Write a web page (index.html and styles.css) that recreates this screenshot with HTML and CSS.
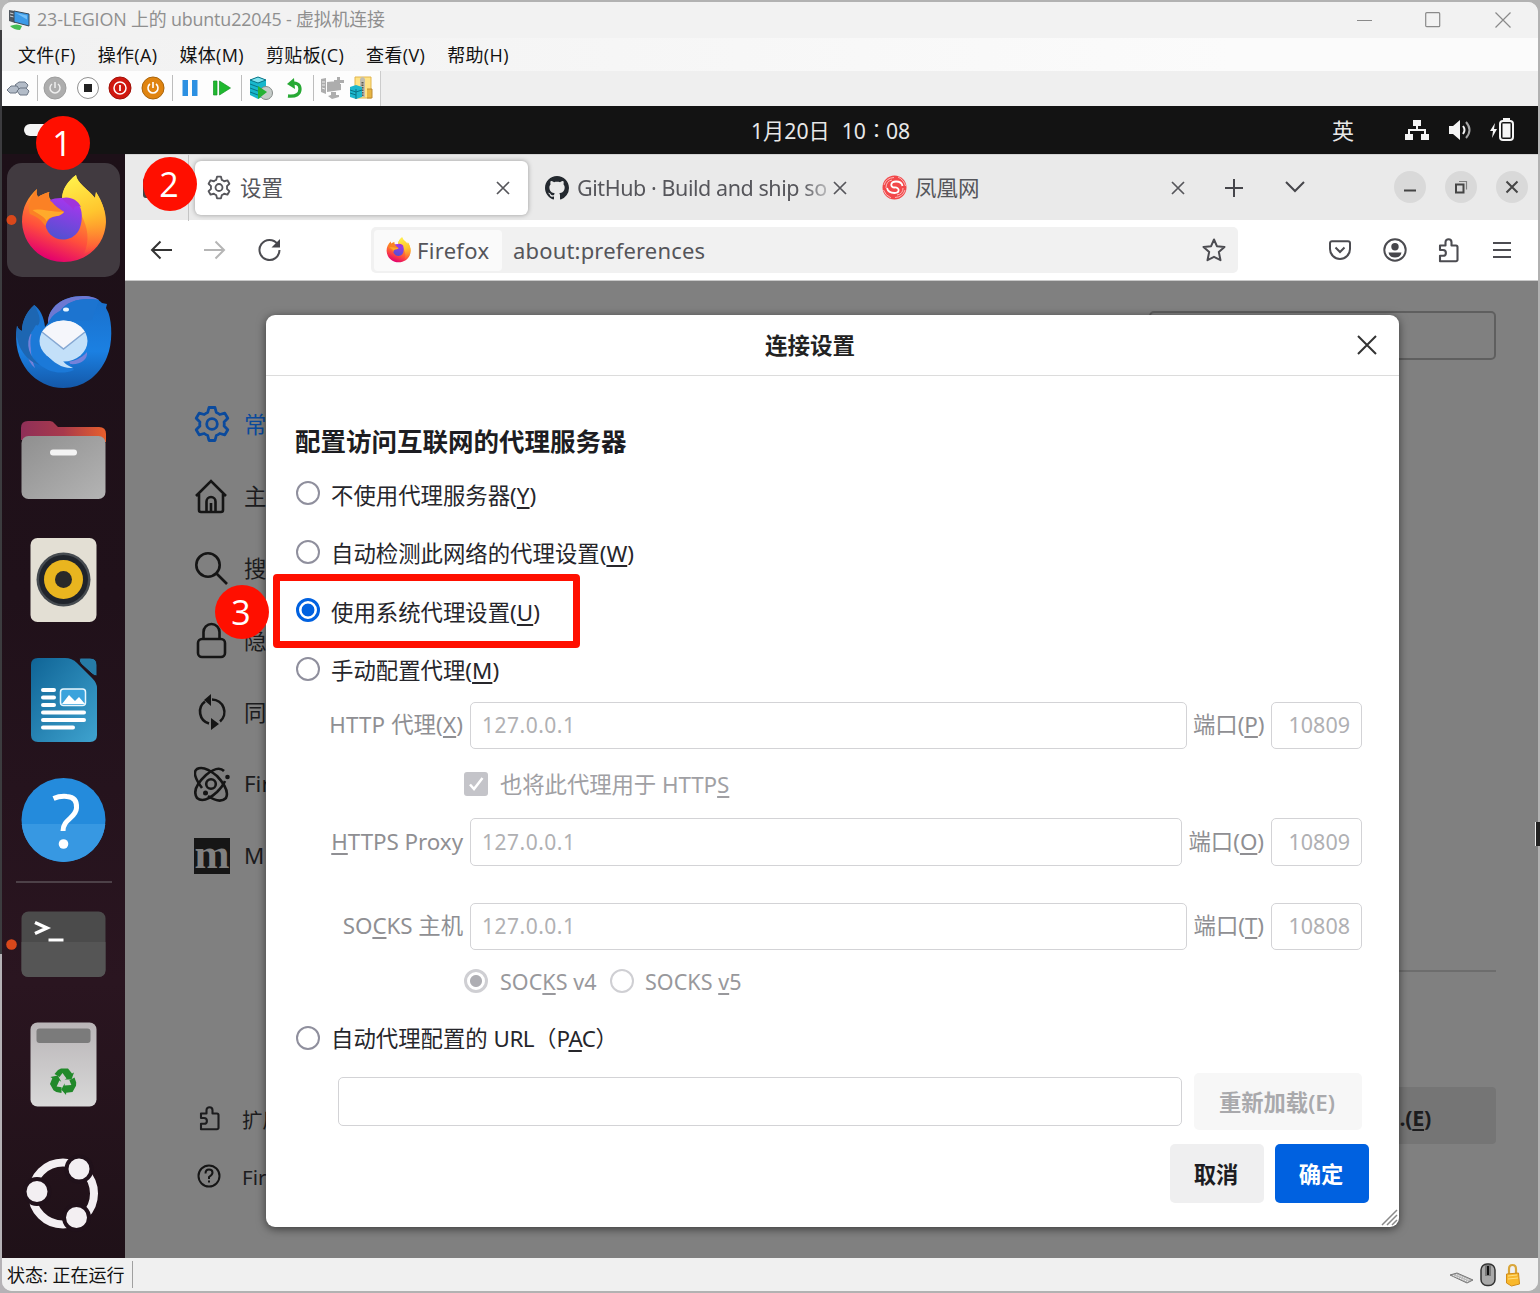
FILE: index.html
```html
<!DOCTYPE html>
<html lang="zh-CN">
<head>
<meta charset="utf-8">
<title>23-LEGION 上的 ubuntu22045 - 虚拟机连接</title>
<link rel="stylesheet" href="styles.css">
</head>
<body>
<svg class="defs" width="0" height="0" aria-hidden="true">
  <defs>
    <linearGradient id="foxBody" x1=".75" y1=".1" x2=".4" y2="1"><stop offset="0" stop-color="#ffd93a"/><stop offset=".35" stop-color="#ff9a2a"/><stop offset=".68" stop-color="#ff4f3c"/><stop offset="1" stop-color="#e3006e"/></linearGradient>
    <linearGradient id="foxFlame" x1=".4" y1="0" x2=".6" y2="1"><stop offset="0" stop-color="#fff04a"/><stop offset=".5" stop-color="#ffc62e"/><stop offset="1" stop-color="#ff8a2c" stop-opacity=".1"/></linearGradient>
    <linearGradient id="foxBall" x1=".6" y1="0" x2=".3" y2="1"><stop offset="0" stop-color="#a736ee"/><stop offset="1" stop-color="#4f52cf"/></linearGradient>
    <linearGradient id="bird" x1="0" y1="0" x2="0" y2="1"><stop offset="0" stop-color="#1a6fca"/><stop offset=".6" stop-color="#1b80e2"/><stop offset="1" stop-color="#1458a8"/></linearGradient>
    <linearGradient id="folderBack"><stop offset="0" stop-color="#8f2f58"/><stop offset=".5" stop-color="#a83a4c"/><stop offset="1" stop-color="#e8602c"/></linearGradient>
    <linearGradient id="folderFront" x1="0" y1="0" x2="1" y2="1"><stop offset="0" stop-color="#8f8f8f"/><stop offset="1" stop-color="#b4b4b4"/></linearGradient>
    <linearGradient id="doc" x1="0" y1="0" x2="1" y2="1"><stop offset="0" stop-color="#0f6496"/><stop offset="1" stop-color="#3fa3cf"/></linearGradient>
    <linearGradient id="bin" x1="0" y1="0" x2="0" y2="1"><stop offset="0" stop-color="#b9b5b7"/><stop offset="1" stop-color="#d9d9d9"/></linearGradient>
    <symbol id="firefox" viewBox="20 175 87 88">
      <path d="M37 189C36 193 37 195 38 197C41 195 45 193 49.300 192C48.500 195 49 198 51 200H62C62 189 68 181 76 175C77 183 88 189 95 198L96 192C102 202 106 211 106 222C105 247 85 262 64 262C41 262 23 245 22 222C22 207 28 197 37 189Z" fill="url(#foxBody)"/>
      <path d="M76 175C77 183 88 189 95 198L96 192C103 203 106 213 105.500 224C104 240 96 249 84 254C90 240 88 228 81 214C78 204 68 200 62 199C62 189 68 181 76 175Z" fill="url(#foxFlame)"/>
      <path d="M50 200C57 197 72 196 80 207C83 213 82 224 79 230C75 237 69 239.500 63 239.500C53 239.500 45 232 45 221C45 212 47 204 50 200Z" fill="url(#foxBall)"/>
      <path d="M62 198C70 196 78 200 81 207C77 205 73 206 74 210C68 203 64 202 62 198Z" fill="#a034dc"/>
      <path d="M37 189C36 193 37 195 38 197C41 195 45 193 49.300 192C48 196 49 200 52 202C55 206 59 209 64 211.700C62 215 58 216 54 216.500C49 218 47 221 45.500 226C42 221 38 217 30 214C27 208 30 196 37 189Z" fill="#fb8125"/>
      <path d="M32.500 210C40 208 50 212 64 211.700C62 215 58 216 54 216.500C50 217 48 219 46.500 221C44 216 38 214 32.500 210Z" fill="#ffaa2b"/>
    </symbol>
    <symbol id="gear" viewBox="0 0 36 38"><path d="M15 2.500h6l1.300 5a12 12 0 0 1 3.500 2l5-1.400 3 5.200-3.700 3.700a12 12 0 0 1 0 4l3.700 3.700-3 5.200-5-1.400a12 12 0 0 1-3.500 2l-1.300 5h-6l-1.300-5a12 12 0 0 1-3.500-2l-5 1.400-3-5.200 3.700-3.700a12 12 0 0 1 0-4l-3.700-3.700 3-5.200 5 1.400a12 12 0 0 1 3.500-2z" fill="none" stroke="currentColor" stroke-width="2.800" stroke-linejoin="round"/><circle cx="18" cy="19" r="5.300" fill="none" stroke="currentColor" stroke-width="2.800"/></symbol>
    <symbol id="puzzle" viewBox="0 0 22 26"><path d="M2 8.500h5.500V5.200a3 3 0 0 1 6 0v3.300h4.500a1.500 1.500 0 0 1 1.500 1.500v12.800a1.500 1.500 0 0 1-1.500 1.500H2v-5.500h3a2.900 2.900 0 0 0 0-5.800H2z" fill="none" stroke="currentColor" stroke-width="2.100" stroke-linejoin="round"/></symbol>
    <symbol id="cross" viewBox="0 0 14 14"><path d="M1 1l12 12M13 1L1 13" fill="none" stroke="currentColor" stroke-width="1.700"/></symbol>
  </defs>
</svg>

<div class="window">
  <header class="titlebar">
    <svg class="vm-icon" width="22" height="22" viewBox="0 0 22 22"><path d="M1 1l6 1v12l-6-2z" fill="#50575e"/><path d="M2 4l4 1M2 7l4 1" stroke="#c9d0d6"/><path d="M6 2l15 3v12L6 13z" fill="#3b9ae8" stroke="#3a4a58"/><path d="M8 4l11 2.500v4z" fill="#74c0f7"/><path d="M2 17q7-3 12 0l-2 4q-6 0-10-4z" fill="#45bd53"/></svg>
    <span class="title">23-LEGION 上的 ubuntu22045 - 虚拟机连接</span>
    <div class="caption">
      <svg width="16" height="16" viewBox="0 0 16 16"><path d="M0 8.500h15"/></svg>
      <svg width="16" height="16" viewBox="0 0 16 16"><rect x=".7" y=".7" width="14" height="14" rx="1"/></svg>
      <svg width="16" height="16" viewBox="0 0 16 16"><path d="M.5.5l15 15M15.500.5l-15 15"/></svg>
    </div>
  </header>
  <nav class="menubar">
    <span>文件(F)</span><span>操作(A)</span><span>媒体(M)</span><span>剪贴板(C)</span><span>查看(V)</span><span>帮助(H)</span>
  </nav>
  <div class="toolbar">
    <div class="tools">
      <svg width="24" height="24" viewBox="0 0 24 24"><g fill="#b3bcc8" stroke="#6d7785"><path d="M9 9l4-3h6l3 3-2 4h-8z"/><path d="M1 14l4-4h6l2 3-3 4H4z"/><path d="M11 15l3-3h6l3 3-2 4-7 0z"/></g></svg>
      <i></i>
      <svg width="24" height="24" viewBox="0 0 24 24"><circle cx="12" cy="12" r="11" fill="#adadad" stroke="#9d9d9d"/><path d="M9 8a5 5 0 1 0 6 0M12 6v6" fill="none" stroke="#eee" stroke-width="1.500"/></svg>
      <svg width="24" height="24" viewBox="0 0 24 24"><circle cx="12" cy="12" r="10.500" fill="#fff" stroke="#909090"/><path d="M8 8h8v8H8z" fill="#222"/></svg>
      <svg width="24" height="24" viewBox="0 0 24 24"><circle cx="12" cy="12" r="11" fill="#d0180f" stroke="#a01008"/><circle cx="12" cy="12" r="6" fill="none" stroke="#fff" stroke-width="1.500"/><path d="M12 9v6" stroke="#fff" stroke-width="1.700"/></svg>
      <svg width="24" height="24" viewBox="0 0 24 24"><circle cx="12" cy="12" r="11" fill="#e08410" stroke="#a8640c"/><path d="M9 8a5 5 0 1 0 6 0M12 6v6" fill="none" stroke="#fff" stroke-width="1.600"/></svg>
      <i></i>
      <svg width="24" height="24" viewBox="0 0 24 24"><path d="M4.500 4h5.500v16H4.500zM14 4h5.500v16H14z" fill="#2c90e2"/></svg>
      <svg width="24" height="24" viewBox="0 0 24 24"><path d="M3.500 5h3.500v14H3.500zM9.500 5l11 7-11 7z" fill="#1fb92f" stroke="#149425" stroke-width=".7"/></svg>
      <i></i>
      <svg width="24" height="24" viewBox="0 0 24 24"><path d="M1 4l8-3 8 3v15l-8 4-8-4z" fill="#18b7cc"/><path d="M1 4l8-3 8 3-8 3zM1 8l8 3M1 12l8 3M1 16l8 3" fill="#7fe3ee" stroke="#087487"/><circle cx="17" cy="17" r="6.500" fill="#c5cbc8" stroke="#858b88"/><path d="M9 10l9 6-9 7z" fill="#25b334"/></svg>
      <svg width="24" height="24" viewBox="0 0 24 24"><path d="M6 20c8 1 12-2 12-7s-4-7-10-5" fill="none" stroke="#27a934" stroke-width="3.300"/><path d="M12 2L5 8l8 5z" fill="#27a934"/></svg>
      <i></i>
      <svg width="24" height="24" viewBox="0 0 24 24"><path d="M1 3l5-1v16l-5-2zM7 6l10-1v3h4v6l-14 2zM11 16h5v3h3v2l-7 2-4-3 3-1zM17 1h3v3h4v3h-4v4h-3V7h-3V4h3z" fill="#adadad"/><path d="M2 6l3 0M2 9l3 0M2 12l3 1" stroke="#eee"/></svg>
      <svg width="24" height="24" viewBox="0 0 24 24"><path d="M6 1h16v21H6z" fill="#ffe385" stroke="#e2b54c"/><path d="M18 13h5v9h-5" stroke="#bd8b34" fill="#e6b441"/><path d="M11 3q2.500-4 5 0v18h-5z" fill="#c1bdb0"/><path d="M13.500 6v14" stroke="#5d594d" stroke-width="2" stroke-dasharray="1.500 1"/><path d="M1 11l6-2 6 2v10l-6 2-6-2z" fill="#1cb7cc"/><path d="M1 14l6 2 6-2M1 17l6 2M7 13v10" stroke="#087487" fill="none"/></svg>
    </div>
  </div>

  <main class="guest">
    <div class="topbar">
      <span class="pill"></span>
      <span class="clock"><span>1月20日</span><span>10<small>∶</small>08</span></span>
      <span class="ime">英</span>
      <svg class="net" width="24" height="20" viewBox="0 0 24 20"><path d="M8 0h8v6H8zM0 14h8v6H0zM16 14h8v6h-8z" fill="#f5f5f5"/><path d="M12 6v4M4 14v-4h16v4" fill="none" stroke="#f5f5f5" stroke-width="2"/></svg>
      <svg class="vol" width="23" height="22" viewBox="0 0 23 22"><path d="M0 7h4l7-6v20l-7-6H0z" fill="#f5f5f5"/><path d="M14 7q3 4 0 8" fill="none" stroke="#f5f5f5" stroke-width="2"/><path d="M17 3q7 8 0 16" fill="none" stroke="#a5a5a5" stroke-width="2"/></svg>
      <svg class="bat" width="25" height="24" viewBox="0 0 25 24"><path d="M5 5L0 13h3l-1 7 5-9H4z" fill="#f5f5f5"/><rect x="10" y="3" width="13" height="19" rx="3" fill="none" stroke="#f5f5f5" stroke-width="2"/><path d="M12.500 5.500h8v14h-8zM13 0h7v2h-7z" fill="#f5f5f5"/></svg>
    </div>

    <div class="desktop">
      <aside class="dock">
        <svg viewBox="2 160 123 120"><rect x="7" y="163" width="113" height="114" rx="15" fill="#413a40"/><circle cx="11.500" cy="220" r="5" fill="#d9481b"/><use href="#firefox" x="20" y="175" width="87" height="88"/></svg>
        <svg viewBox="2 280 123 120"><path d="M17 325.700C18 329 20 330 22 331C22 321 27 311 34.300 305C40 309 44 317 45 327L48 323C48 307 63 296 83 296C92 296 98 299 102 303L107 304L106 308L108.500 313C112 323 113 343 107 357C99 377 82 388 63.500 388C36 388 11 363 17 325.700Z" fill="url(#bird)"/><path d="M48 323C48 307 63 296 83 296C91 296 96 298 99 300C84 297 68 300 61 311C55 313 51 317 48 323Z" fill="#6d78d2"/><path d="M60 311C67 300 84 297 99 300L92 320L50 322C52 316 56 313 60 311Z" fill="#1c74d0"/><path d="M29 333C24 345 26 361 35 368C31 357 29 348 33 335ZM62 361C70 363 80 360 87 352C88 360 80 365 70 364Z" fill="#7482da"/><path d="M17 325.700C14 347 28 362 40 365C29 357 25 344 31 333C36 325 46 326 34.300 305C27 311 22 321 22 331C20 330 18 329 17 325.700Z" fill="#1d66b2"/><path d="M36 325C27 338 30 352 37 362C45 371 60 376 74 370L50 330Z" fill="#1b79d8"/><ellipse cx="63.500" cy="341" rx="24" ry="20.500" fill="#c3e0f9"/><path d="M42 332Q50 320.500 63.500 320.500Q78 320.500 85 332L63.500 349Z" fill="#f5f6fb"/><path d="M42 332l21.500 17L85 332" fill="none" stroke="#86a8d3" stroke-width="1.500"/><path d="M47 355C54 363 63 369 73 368C66 365 61 361 62 356Z" fill="#c3e0f9"/><ellipse cx="66" cy="309.500" rx="3" ry="2" fill="#e6f5ff"/></svg>
        <svg viewBox="2 400 123 120"><path d="M21 440v-12q0-7 7-7h22q3 0 5 3l3 3h41q7 0 7 7v8z" fill="url(#folderBack)"/><rect x="21.500" y="436" width="84" height="63" rx="7" fill="url(#folderFront)"/><rect x="50" y="449.500" width="27" height="6" rx="3" fill="#f4f4f4"/></svg>
        <svg viewBox="2 520 123 120"><rect x="30.500" y="538" width="66" height="84" rx="7" fill="#e3dfd4"/><circle cx="63.500" cy="579.500" r="27" fill="#464b50"/><circle cx="63.500" cy="579.500" r="24.500" fill="#20242b"/><circle cx="63.500" cy="579.500" r="19.500" fill="#e9b51f"/><circle cx="63.500" cy="579.500" r="8.500" fill="#292929"/></svg>
        <svg viewBox="2 640 123 120"><path d="M38 658h27q7 0 12 5l15 15q5 5 5 10v47q0 7-7 7H38q-7 0-7-7v-70q0-7 7-7z" fill="url(#doc)"/><path d="M80 658h10q7 0 7 7v11q-3 0-5-2L81 664q-3-3-1-6z" fill="#267ba7" stroke="#20111a"/><path d="M43 690h11M43 697.500h11M43 705h11M43 712.500h41M43 720h41M43 727.500h30" stroke="#fff" stroke-width="4" stroke-linecap="round"/><rect x="60.500" y="689" width="25" height="16.500" rx="3" fill="#3aa3dc" stroke="#e9f6fd" stroke-width="1.500"/><path d="M62 704l7-9 6 6 4-4 6 7z" fill="#fff"/></svg>
        <svg viewBox="2 760 123 120"><circle cx="63.500" cy="820" r="42" fill="#248bdc"/><path d="M21.700 824a42 42 0 0 0 83.600 0z" fill="#3798e2"/><path d="M53.500 798.500C57 797 62 796 67 796.500C74 797 77 801 76.500 808C76 818 63 819 63 831" fill="none" stroke="#fff" stroke-width="5"/><circle cx="63.500" cy="844" r="4.800" fill="#fff"/></svg>
        <hr>
        <svg viewBox="2 884 123 120"><circle cx="11.500" cy="944.500" r="5.300" fill="#d9481b"/><rect x="21.500" y="911.500" width="84" height="65.500" rx="7" fill="#4b4b4b"/><path d="M21.500 942h84v28q0 7-7 7h-70q-7 0-7-7z" fill="#555"/><path d="M35 922.500l12 5.500-12 5.500" fill="none" stroke="#fff" stroke-width="3.400"/><path d="M48.500 940h15" stroke="#fff" stroke-width="3"/></svg>
        <svg viewBox="2 1004 123 120"><rect x="30.500" y="1022.500" width="66" height="84" rx="7" fill="url(#bin)"/><rect x="36.500" y="1028.500" width="54" height="14.500" rx="3" fill="#7b7b7b"/><g fill="#21892a"><path d="M58 1070l3-1.500h7l4 5 2-1-2.500 7h-7l2-1-4-5.500-3 4-5-3z"/><path d="M58 1070l3-1.500h7l4 5 2-1-2.500 7h-7l2-1-4-5.500-3 4-5-3z" transform="rotate(120 63.500 1081.500)"/><path d="M58 1070l3-1.500h7l4 5 2-1-2.500 7h-7l2-1-4-5.500-3 4-5-3z" transform="rotate(240 63.500 1081.500)"/></g></svg>
        <svg class="launcher" viewBox="2 1133 123 120"><circle cx="63" cy="1193.500" r="31" fill="none" stroke="#f3eff2" stroke-width="8"/><g fill="#f3eff2" stroke="#20111a" stroke-width="4"><circle cx="79" cy="1169" r="12.500"/><circle cx="37" cy="1191.500" r="12.500"/><circle cx="76.500" cy="1217.500" r="12.500"/></g></svg>
      </aside>

      <section class="browser">
        <div class="tabstrip">
          <div class="pinned"><i></i></div>
          <div class="tab active">
            <svg class="tab-gear" width="24" height="25"><use href="#gear"/></svg>
            <span>设置</span>
            <svg class="tab-x" width="14" height="14"><use href="#cross"/></svg>
          </div>
          <div class="tab github">
            <svg width="24" height="24" viewBox="0 0 16 16"><path d="M8 0C3.580 0 0 3.580 0 8c0 3.540 2.290 6.530 5.470 7.590.4.070.55-.17.55-.38 0-.19-.01-.82-.01-1.490-2.010.37-2.530-.49-2.690-.94-.09-.23-.48-.94-.82-1.130-.28-.15-.68-.52-.01-.53.63-.01 1.080.58 1.230.82.72 1.210 1.870.87 2.330.66.070-.52.28-.87.51-1.070-1.780-.2-3.640-.89-3.640-3.950 0-.87.31-1.590.82-2.150-.08-.2-.36-1.020.08-2.120 0 0 .67-.21 2.200.82.64-.18 1.320-.27 2-.27s1.360.09 2 .27c1.530-1.040 2.200-.82 2.200-.82.44 1.100.16 1.920.08 2.120.51.56.82 1.270.82 2.150 0 3.070-1.870 3.750-3.650 3.950.29.25.54.73.54 1.480 0 1.070-.01 1.930-.01 2.200 0 .21.15.46.55.38A8.010 8.010 0 0 0 16 8c0-4.420-3.580-8-8-8z" fill="#24292f"/></svg>
            <span class="gh-title">GitHub · Build and ship so</span>
            <svg width="14" height="14"><use href="#cross"/></svg>
          </div>
          <div class="tab ifeng">
            <svg width="25" height="25" viewBox="0 0 25 25"><circle cx="12.500" cy="12.500" r="12" fill="#f2484a"/><path d="M12.500 18C18 18 18 12 12.500 12.500C8 12.500 8 6.500 14 6.500C18 6.500 20 8 20.500 11M12.500 18C9 18 6 17 5 13" fill="none" stroke="#fff" stroke-width="1.800"/><path d="M2 10Q4 3 12 2.500M4 13Q4 6 10 5M23 15Q21 22 13 22.500M21 13Q21 19 15 20M16 2Q22 5 23.500 11M9 23Q3 20 1.500 15" fill="none" stroke="#fbb9b9" stroke-width="1"/></svg>
            <span>凤凰网</span>
            <svg class="ifeng-x" width="14" height="14"><use href="#cross"/></svg>
          </div>
          <svg class="plus" width="18" height="18" viewBox="0 0 18 18"><path d="M9 0v18M0 9h18"/></svg>
          <svg class="chev" width="20" height="12" viewBox="0 0 20 12"><path d="M1 1l9 9 9-9"/></svg>
          <div class="wm">
            <b><svg width="14" height="14" viewBox="0 0 14 14"><path d="M1 10.500h12"/></svg></b>
            <b><svg width="14" height="14" viewBox="0 0 14 14"><path d="M2 4.500h7.500v8H2z"/><path d="M5 1.500h7.500v8" stroke-width="1.200" opacity=".6"/></svg></b>
            <b><svg width="14" height="14" viewBox="0 0 14 14"><path d="M1.500 1.500l11 11M12.500 1.500l-11 11"/></svg></b>
          </div>
        </div>

        <div class="navbar">
          <svg class="back" width="22" height="20" viewBox="0 0 22 20"><path d="M22 10H2M10.500 1.500L2 10l8.500 8.500"/></svg>
          <svg class="fwd" width="22" height="20" viewBox="0 0 22 20"><path d="M0 10h20M11.500 1.500L20 10l-8.500 8.500"/></svg>
          <svg class="reload" width="24" height="24" viewBox="0 0 24 24"><path d="M19.500 6A10 10 0 1 0 21.500 12"/><path d="M22 1v8.500h-8.500z" fill="#46464b" stroke="none"/></svg>
          <div class="urlbar">
            <div class="identity"><svg width="25" height="26"><use href="#firefox"/></svg><span>Firefox</span></div>
            <span class="url">about:preferences</span>
            <svg class="star" width="24" height="24" viewBox="0 0 24 24"><path d="M12 1.500l2.900 6.700 7.600.7-5.700 5 1.700 8.300L12 18.800l-6.500 3.400 1.700-8.300-5.700-5 7.600-.7z" stroke-linejoin="round"/></svg>
          </div>
          <svg class="pocket" width="22" height="20" viewBox="0 0 22 20"><path d="M3 1.200h16a2 2 0 0 1 2 2V9a10 10 0 0 1-20 0V3.200a2 2 0 0 1 2-2z"/><path d="M6.500 7.500l4.500 4.500 4.500-4.500"/></svg>
          <svg class="account" width="24" height="24" viewBox="0 0 24 24"><circle cx="12" cy="12" r="10.700"/><circle cx="12" cy="8.700" r="3.700" fill="#46464b" stroke="none"/><path d="M5.500 14.500h13q-1 5-6.500 5t-6.500-5z" fill="#46464b" stroke="none"/></svg>
          <svg class="ext" width="22" height="26"><use href="#puzzle"/></svg>
          <svg class="burger" width="18" height="16" viewBox="0 0 18 16"><path d="M0 1h18M0 8h18M0 15h18"/></svg>
        </div>

        <div class="page">
          <div class="categories">
            <div class="cat current"><svg width="36" height="38"><use href="#gear"/></svg><span>常</span></div>
            <div class="cat"><svg width="36" height="36" viewBox="0 0 36 36"><path d="M2 18L17 3l15 15M5 16v16q0 2 2 2h20q2 0 2-2V16M12.500 34V23.500a4.500 4.500 0 0 1 9 0V34M17 34v-9"/></svg><span>主</span></div>
            <div class="cat"><svg width="36" height="36" viewBox="0 0 36 36"><circle cx="14" cy="15" r="11.700"/><path d="M22 23l11 11"/></svg><span>搜</span></div>
            <div class="cat"><svg width="36" height="38" viewBox="0 0 36 38"><rect x="4" y="18" width="27" height="18" rx="4"/><path d="M9.500 18v-7a8 8 0 0 1 16 0v7"/></svg><span>隐</span></div>
            <div class="cat"><svg width="36" height="38" viewBox="0 0 36 38"><path d="M11 8.500A12.500 12.500 0 0 0 15 30.500M18 6.500a12.500 12.500 0 0 1 8 22"/><path d="M17 1v12l-7-6zM17 25v12l8-6z" fill="#151515" stroke="none"/></svg><span>同</span></div>
            <div class="cat"><svg width="36" height="38" viewBox="0 0 36 38"><circle cx="17" cy="19" r="4.800"/><path d="M30 6Q24 0 12 10Q-3 24 3 33Q10 39 23 27Q29 21 31 16"/><path d="M8 23Q-3 8 3 4Q10 0 23 11Q36 25 32 33Q26 39 14 31"/><circle cx="33.500" cy="12" r="2.300" fill="#151515" stroke="none"/><circle cx="11.500" cy="28" r="2.500" fill="#151515" stroke="none"/></svg><span>Fir</span></div>
            <div class="cat"><b class="moz">m</b><span>M</span></div>
            <div class="foot first"><svg width="22" height="26"><use href="#puzzle"/></svg><span>扩展</span></div>
            <div class="foot"><svg width="24" height="24" viewBox="0 0 24 24"><circle cx="12" cy="12" r="10.500"/><path d="M8.500 9.500q0-4 3.500-4t3.500 3.200q0 2-3.500 4.300v2"/><path d="M12 16.500v2"/></svg><span>Fir</span></div>
          </div>
          <div class="pane">
            <div class="search"></div>
            <hr>
            <div class="import">.(<u>E</u>)</div>
          </div>

          <div class="dialog">
            <div class="dlg-head"><h2>连接设置</h2><svg width="20" height="20" viewBox="0 0 20 20"><path d="M1 1l18 18M19 1L1 19" fill="none" stroke="#333" stroke-width="2"/></svg></div>
            <div class="dlg-body">
              <h3>配置访问互联网的代理服务器</h3>
              <label class="opt"><i class="radio"></i><span>不使用代理服务器(<u>Y</u>)</span></label>
              <label class="opt"><i class="radio"></i><span>自动检测此网络的代理设置(<u>W</u>)</span></label>
              <label class="opt"><i class="radio on"></i><span>使用系统代理设置(<u>U</u>)</span></label>
              <label class="opt"><i class="radio"></i><span>手动配置代理(<u>M</u>)</span></label>
              <div class="proxy http"><span class="name">HTTP 代理(<u>X</u>)</span><div class="field">127.0.0.1</div><span class="port">端口(<u>P</u>)</span><div class="num">10809</div></div>
              <div class="also"><svg width="24" height="24" viewBox="0 0 24 24"><rect width="24" height="24" rx="3" fill="#c4c4c9"/><path d="M6 12.500l4 4.500 8.500-11" fill="none" stroke="#fff" stroke-width="2.500"/></svg><span>也将此代理用于 HTTP<u>S</u></span></div>
              <div class="proxy https"><span class="name"><u>H</u>TTPS Proxy</span><div class="field">127.0.0.1</div><span class="port">端口(<u>O</u>)</span><div class="num">10809</div></div>
              <div class="proxy socks"><span class="name">SO<u>C</u>KS 主机</span><div class="field">127.0.0.1</div><span class="port">端口(<u>T</u>)</span><div class="num">10808</div></div>
              <div class="versions"><i class="radio on"></i><span>SOC<u>K</u>S v4</span><i class="radio"></i><span>SOCKS <u>v</u>5</span></div>
              <label class="opt pac"><i class="radio"></i><span>自动代理配置的 <em>URL</em>（<em>P<u>A</u>C</em>）</span></label>
              <div class="pacrow"><div class="field"></div><div class="btn reload-btn">重新加载(E)</div></div>
              <div class="actions"><div class="btn">取消</div><div class="btn primary">确定</div></div>
            </div>
            <svg class="grip" width="17" height="17" viewBox="0 0 17 17"><path d="M1 16L16 1M6 16L16 6M11 16l5-5" stroke="#8a8a8a" stroke-width="1.500"/></svg>
          </div>
        </div>
      </section>
    </div>
  </main>

  <footer class="statusbar">
    <span class="state">状态: 正在运行</span>
    <svg class="keyboard" width="26" height="12" viewBox="0 0 26 12"><path d="M1 3l7-2 16 7-6 3z" fill="#b5b5b5" stroke="#777"/><path d="M4 3.500l15 6M7 2.500l14 6" stroke="#eee" stroke-dasharray="1.500 1"/></svg>
    <svg class="mouse" width="16" height="24" viewBox="0 0 16 24"><rect x="1" y="1" width="14" height="21.500" rx="6" fill="#a9a9a9" stroke="#333" stroke-width="1.500"/><path d="M5 2h6v11H5z" fill="#777"/><path d="M8 3v9" stroke="#111" stroke-width="2"/></svg>
    <svg class="lock" width="16" height="24" viewBox="0 0 16 24"><path d="M4 12V6q0-4 3.500-4T11 6v6" fill="none" stroke="#d9a63b" stroke-width="2.200"/><path d="M1.500 11l12-1 1 11-8 2-5-3z" fill="#f9b82c" stroke="#d28c17"/><path d="M3 13l9-1M3 16l10-1" stroke="#ffe184"/></svg>
  </footer>
</div>

<div class="highlight"></div>
<div class="badge one">1</div>
<div class="badge two">2</div>
<div class="badge three">3</div>
<div class="pointer"></div>
</body>
</html>
```
FILE: styles.css
```css
* { box-sizing: border-box; }
body {
  margin: 0;
  width: 1540px;
  height: 1293px;
  overflow: hidden;
  position: relative;
  padding: 2px;
  background: linear-gradient(#b9b9b9 0 30px, #3c3c3f 30px 954px, #b5b2b6 954px) 0 0 / 8px 100% no-repeat, #b2b2b2;
  font-family: "Noto Sans", "Noto Sans CJK SC", sans-serif;
  color: #15141a;
}
svg { display: block; flex: none; }
.defs { position: absolute; }
span, h2, h3 { white-space: nowrap; }
u { text-underline-offset: 3px; text-decoration-thickness: 1.5px; text-decoration-skip-ink: none; }

.window {
  width: 1536px;
  height: 1289px;
  border-radius: 10px;
  overflow: hidden;
  display: flex;
  flex-direction: column;
  background: #f0f0f0;
  font-family: "Open Sans", "Noto Sans CJK SC", sans-serif;
}
.titlebar { height: 36px; display: flex; align-items: center; background: #f2f2f2; }
.vm-icon { margin-left: 6px; }
.title { margin-left: 7px; margin-top: -2px; font-size: 17.900px; letter-spacing: -.16px; color: #8f8f8f; line-height: 24px; }
.caption { margin-left: auto; margin-right: 27px; margin-top: -1px; display: flex; gap: 54px; }
.caption svg { fill: none; stroke: #8a8a8a; stroke-width: 1.200; }
.caption svg:first-child { margin-right: -2px; }
.menubar { height: 33px; display: flex; align-items: center; padding-left: 16px; gap: 22px; font-size: 18px; color: #111; background: linear-gradient(90deg, #f1f1f1, #fbfbfb 80%); }
.menubar span { letter-spacing: .35px; line-height: 24px; }
.toolbar { height: 35px; background: #efefef; }
.tools { width: 379px; height: 35px; padding: 0 0 2px 4px; display: flex; align-items: center; background: #fdfdfd; border-right: 1px solid #ccc; }
.tools i { width: 1px; height: 26px; background: #bdbdbd; margin: 0 5px 0 7px; }
.tools svg + svg { margin-left: 8.500px; }
.tools i:nth-of-type(2) { margin: 0 5px 0 7px; }
.tools i:nth-of-type(3) { margin: 0 7px 0 7px; }
.tools i:nth-of-type(4) { margin: 0 6px 0 7px; }
.tools svg:last-child { margin-left: 5px; }

.guest { height: 1152px; font-family: "Noto Sans", "Noto Sans CJK SC", sans-serif; }
.topbar { height: 48px; display: flex; align-items: center; background: #131313; color: #e8e8e8; font-size: 22px; }
.pill { width: 40px; height: 12px; border-radius: 6px; background: #f5f5f5; margin-left: 22px; }
.clock { margin-left: 687px; width: 166px; display: flex; gap: 12px; font-size: 21.200px; line-height: 30px; padding-top: 2px; }
.clock small { display: inline-block; width: 20px; text-align: center; font: 21px/20px "Noto Sans CJK SC", sans-serif; vertical-align: 1px; }
.ime { margin-left: 415px; line-height: 30px; }
.net { margin-left: 51px; }
.vol { margin-left: 20px; }
.bat { margin-left: 18px; }

.desktop { display: flex; height: 1104px; }
.dock { width: 123px; padding-top: 6px; background: linear-gradient(#1d1018, #20111a 40%, #2a1520 75%, #1f1118); }
.dock svg { width: 123px; height: 120px; }
.dock hr { width: 96px; height: 2px; margin: 1px auto; border: 0; background: #4d4148; }
.dock .launcher { margin-top: 9px; }

.browser { width: 1413px; }
.tabstrip { height: 66px; display: flex; align-items: center; background: #eaeaea; border-top: 1px solid #d5d5d5; color: #56565b; font-size: 21.500px; }
.tabstrip span { line-height: 30px; }
.pinned { width: 64px; height: 66px; border-right: 1px solid #c4c4c4; display: flex; align-items: center; padding-left: 18px; }
.pinned i { width: 16px; height: 20px; background: #444; border-radius: 3px; }
.tab { display: flex; align-items: center; }
.active { width: 333px; height: 54px; margin-left: 6px; padding-left: 12px; background: #fff; border-radius: 6px; box-shadow: 0 0 5px rgba(0,0,0,.35); }
.active span { margin-left: 9px; }
.tab-x { margin-left: auto; margin-right: 18px; }
.github { margin-left: 17px; }
.gh-title { width: 249px; margin: 0 7px 0 8px; letter-spacing: -.43px; -webkit-mask-image: linear-gradient(90deg, #000 225px, rgba(0,0,0,.35) 249px); mask-image: linear-gradient(90deg, #000 225px, rgba(0,0,0,.35) 249px); }
.ifeng { margin-left: 35px; }
.ifeng span { margin-left: 8px; width: 66px; }
.ifeng-x { margin-left: 190px; }
.plus, .chev { fill: none; stroke: #46464b; stroke-width: 2; }
.plus { margin-left: 40px; margin-top: 1px; }
.chev { margin-left: 42px; margin-top: -2px; }
.wm { display: flex; margin-left: 89px; gap: 19px; margin-top: -1px; }
.wm b { width: 32px; height: 32px; border-radius: 16px; background: #d9d9d9; display: flex; align-items: center; justify-content: center; }
.wm svg { fill: none; stroke: #454545; stroke-width: 2; }

.navbar { height: 61px; display: flex; align-items: center; background: #fff; border-bottom: 1px solid #c9c9c9; color: #55555a; font-size: 22px; }
.navbar svg { fill: none; stroke: #4c4c51; stroke-width: 2; color: #4c4c51; }
.navbar .back { margin-left: 25px; stroke: #333; }
.navbar .fwd { margin-left: 32px; stroke: #b5b5b5; }
.reload { margin-left: 32px; }
.urlbar { width: 867px; height: 46px; margin-left: 89px; background: #f1f1f1; border-radius: 5px; display: flex; align-items: center; }
.identity { width: 128px; height: 41px; margin-left: 3px; padding-left: 12px; display: flex; align-items: center; gap: 6px; background: #fafafa; border-radius: 4px; }
.identity svg { stroke: none; }
.identity span { letter-spacing: .3px; }
.url { margin-left: 11px; letter-spacing: .17px; }
.star { margin-left: auto; margin-right: 12px; }
.pocket { margin-left: 91px; }
.account { margin-left: 32px; }
.ext { margin-left: 31px; }
.burger { margin-left: 33px; }

.page { position: relative; height: 977px; background: #808080; display: flex; justify-content: space-between; color: #1c1c1e; }
.categories { padding: 107px 0 0 69px; font-size: 22.400px; }
.cat { height: 72px; display: flex; align-items: center; gap: 14px; }
.cat span { margin-top: -2px; }
.cat svg, .foot svg { fill: none; stroke: #151515; stroke-width: 2.600; }
.cat.current { color: #0b4a9c; }
.cat.current svg { color: #0b4a9c; stroke: none; }
.moz { width: 36px; height: 36px; background: #161616; color: #808080; font: 700 42px/32px "Liberation Serif", "DejaVu Serif", serif; text-align: center; }
.foot { height: 58px; display: flex; align-items: center; font-size: 20.500px; gap: 21px; padding-left: 3px; }
.foot svg { stroke-width: 2; margin-top: -2px; }
.foot.first { margin-top: 198px; padding-left: 5px; }
.pane { width: 347px; margin: 30px 42px 0 0; }
.search { height: 49px; border: 2px solid #5f5f5f; border-radius: 5px; }
.pane hr { border: 0; height: 2px; margin: 610px 0 0; background: #6d6d6d; }
.import { height: 57px; margin-top: 115px; padding-right: 65px; text-align: right; background: #757575; border-radius: 4px; font-weight: 700; font-size: 21.500px; line-height: 62px; letter-spacing: -.3px; }

.dialog { position: absolute; left: 141px; top: 34px; width: 1133px; height: 912px; background: #fff; border-radius: 9px; box-shadow: 0 2px 10px rgba(0,0,0,.55); color: #26262b; font-size: 22.400px; }
.dlg-head { height: 61px; border-bottom: 1px solid #dcdcdc; display: flex; align-items: center; }
.dlg-head h2 { margin: 0 0 0 499px; padding-top: 2px; width: 582px; font-size: 22.500px; line-height: 30px; font-weight: 700; color: #222; }
.dlg-head svg { margin-left: 10px; }
.dlg-body { padding: 42px 37px 0 30px; }
h3 { margin: 0 0 0 -1px; height: 46px; line-height: 46px; font-size: 25.500px; font-weight: 700; color: #1d1d22; }
.opt { height: 58.500px; display: flex; align-items: center; gap: 12px; }
.opt span { padding-top: 5px; line-height: 30px; margin-left: -1px; }
.radio { flex: none; width: 24px; height: 24px; border: 2.500px solid #8f8f9d; border-radius: 50%; background: #fff; }
.radio.on { border-color: #0061e0; border-width: 3px; background: radial-gradient(#0061e0 6px, #fff 6.800px); }
.proxy { height: 47px; display: flex; align-items: center; color: #8f8f93; }
.name { width: 167px; text-align: right; margin-right: 7px; font-size: 22.400px; line-height: 30px; margin-top: -1px; letter-spacing: -.05px; }
.http .name { letter-spacing: .1px; }
.field { flex: 1; height: 100%; border: 1.500px solid #d3d3d6; border-radius: 5px; padding-left: 11px; display: flex; align-items: center; font-size: 21px; color: #b0b0b3; letter-spacing: .5px; }
.port { width: 71px; margin: -1px 7px 0 6px; font-size: 22.400px; line-height: 30px; letter-spacing: -.05px; text-align: right; }
.num { width: 91px; height: 100%; border: 1.500px solid #d3d3d6; border-radius: 5px; padding-right: 11px; display: flex; align-items: center; justify-content: flex-end; font-size: 21.500px; color: #b0b0b3; }
.field, .num { line-height: 30px; padding-bottom: 1px; }
.http { margin-top: 4px; }
.https { height: 48px; }
.https .port { width: 76px; margin-left: 6px; }
.also { height: 69px; padding-left: 168px; display: flex; align-items: center; gap: 12px; color: #a0a0a4; }
.also span { letter-spacing: -.08px; }
.socks { margin-top: 37px; }
.versions { height: 61px; padding-left: 168px; display: flex; align-items: center; color: #98989c; font-size: 21.500px; }
.versions .radio { border-color: #cfcfd3; }
.versions .radio.on { background: radial-gradient(#aeaeb3 5.500px, #fff 6.500px); border-color: #cfcfd3; }
.versions span { margin: 1px 13px 0 12px; width: 97px; letter-spacing: .05px; }
.versions span + .radio + span { margin-left: 11px; }
.pac { height: 55px; padding-bottom: 2px; }
.pac span { padding-top: 3px; }
.opt em { font-style: normal; letter-spacing: -.5px; }
.pacrow { display: flex; align-items: center; margin: 7px 0 0 42px; height: 57px; }
.pacrow .field { height: 49px; }
.btn { height: 59px; width: 94px; border-radius: 5px; background: #efeff0; font-size: 22.300px; font-weight: 700; display: flex; align-items: center; justify-content: center; padding-right: 2px; color: #1d1d22; }
.pacrow .reload-btn { width: 168px; height: 57px; margin-left: 12px; background: #f7f7f7; color: #a9a9ac; font-weight: 600; }
.actions { margin: 14px -7px 0 0; display: flex; justify-content: flex-end; gap: 11px; }
.btn.primary { background: #0061e0; color: #fff; }
.grip { position: absolute; right: 1px; bottom: 1px; }

.statusbar { height: 33px; display: flex; align-items: center; background: #f0f0f0; }
.state { width: 131px; height: 27px; padding-left: 5px; border-right: 1px solid #a0a0a0; font-size: 18px; line-height: 29px; color: #111; margin-right: 1316px; }
.keyboard { margin-top: 7px; }
.mouse { margin-left: 5px; }
.lock { margin-left: 9px; }

.highlight { position: absolute; left: 273px; top: 574px; width: 307px; height: 74px; border: 7px solid #ff0f00; border-radius: 4px; }
.badge { position: absolute; width: 54px; height: 54px; border-radius: 50%; background: #ff0f00; color: #fff; font: 34px/54px "Open Sans", sans-serif; text-align: center; padding-right: 2px; }
.one { left: 36px; top: 116px; }
.two { left: 143px; top: 157px; }
.three { left: 215px; top: 585px; }
.pointer { position: absolute; left: 1535px; top: 822px; width: 5px; height: 24px; background: #222; border-left: 1px solid #eee; }
```
